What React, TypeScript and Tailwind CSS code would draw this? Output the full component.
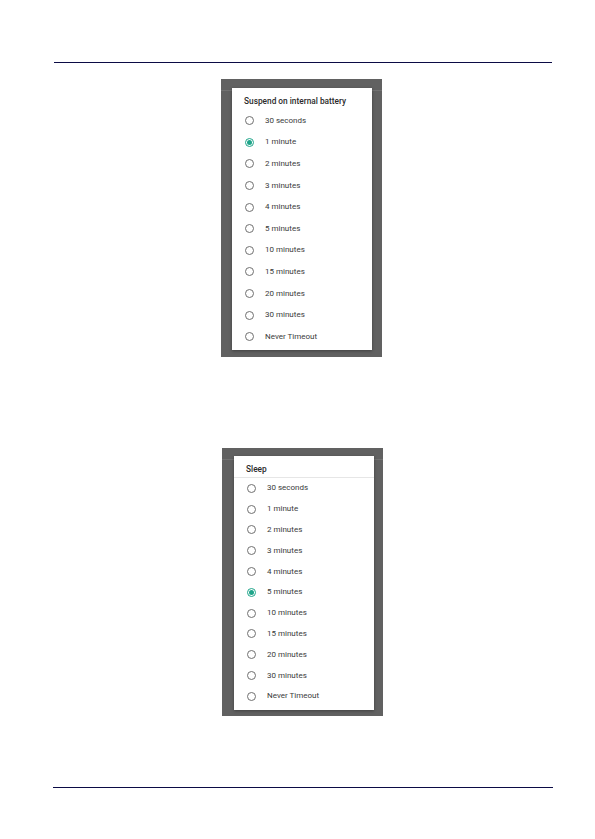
const suspendOptions = [
  "30 seconds",
  "1 minute",
  "2 minutes",
  "3 minutes",
  "4 minutes",
  "5 minutes",
  "10 minutes",
  "15 minutes",
  "20 minutes",
  "30 minutes",
  "Never Timeout",
];

function Radio({ checked }: { checked: boolean }) {
  return (
    <span
      className={
        checked
          ? "flex h-[9px] w-[9px] shrink-0 items-center justify-center rounded-full border border-[#1fa58a]"
          : "flex h-[9px] w-[9px] shrink-0 items-center justify-center rounded-full border border-[#707070]"
      }
    >
      {checked && <span className="h-[5px] w-[5px] rounded-full bg-[#1fa58a]" />}
    </span>
  );
}

function Dialog({
  title,
  selected,
  rowClass,
  titleClass,
  outerClass,
  dialogClass,
}: {
  title: string;
  selected: string;
  rowClass: string;
  titleClass: string;
  outerClass: string;
  dialogClass: string;
}) {
  return (
    <div className={outerClass}>
      {/* faint header line of the screen behind */}
      <div className="pointer-events-none absolute left-0 right-0 top-[11px] h-px bg-[#727272]" />
      <div className={dialogClass}>
        <div className={titleClass}>{title}</div>
        <div className="flex flex-col">
          {suspendOptions.map((opt) => (
            <div key={opt} className={rowClass}>
              <Radio checked={opt === selected} />
              <span className="text-[8px] font-normal leading-[10px] text-[#3a3a3a]">{opt}</span>
            </div>
          ))}
        </div>
      </div>
    </div>
  );
}

export default function App() {
  return (
    <div
      className="relative flex h-[839px] w-[595px] flex-col bg-white"
      style={{ fontFamily: "Roboto, 'Noto Sans', sans-serif" }}
    >
      <div className="ml-[54px] mr-[43px] mt-[62px] h-px bg-[#0b0b45]" />

      <Dialog
        title="Suspend on internal battery"
        selected="1 minute"
        titleClass="pl-[12px] pt-[8px] pb-[4px] text-[8.3px] font-medium leading-[10px] text-[#2b2b2b]"
        outerClass="relative ml-[221px] mt-[16px] h-[278px] w-[161px] bg-[#616161] pl-[11px] pt-[9px]"
        dialogClass="relative h-[262px] w-[140px] bg-white shadow-[0_1px_3px_rgba(0,0,0,0.35)]"
        rowClass="flex h-[21.6px] items-center gap-[11px] pl-[13px]"
      />

      <Dialog
        title="Sleep"
        selected="5 minutes"
        titleClass="border-b border-[#e6e6e6] pl-[12px] pt-[8px] pb-[3px] text-[8.3px] font-medium leading-[10px] text-[#2b2b2b]"
        outerClass="relative ml-[222px] mt-[91px] h-[268px] w-[161px] bg-[#616161] pl-[12px] pt-[8px]"
        dialogClass="relative h-[254px] w-[140px] bg-white pb-[4px] shadow-[0_1px_3px_rgba(0,0,0,0.35)]"
        rowClass="flex h-[20.8px] items-center gap-[11px] pl-[13px]"
      />

      <div className="ml-[53px] mr-[42px] mt-[71px] h-px bg-[#0b0b45]" />
    </div>
  );
}
